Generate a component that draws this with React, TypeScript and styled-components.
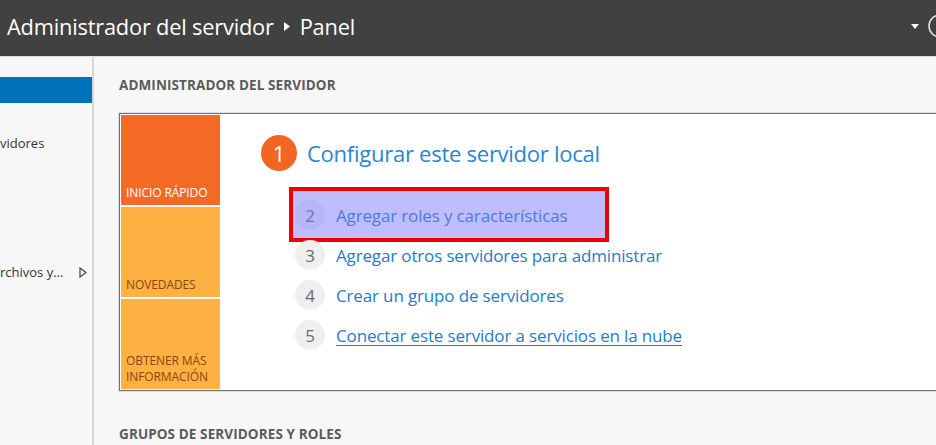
import React from 'react';
import styled, {createGlobalStyle} from 'styled-components';

const GlobalStyle = createGlobalStyle`
  html, body {
    margin: 0;
    padding: 0;
    background: #f7f7f7;
    font-family: "Open Sans", "Noto Sans", "Liberation Sans", sans-serif;
    overflow: hidden;
  }
`;

const Page = styled.div`
  width: 936px;
  height: 445px;
  display: flex;
  flex-direction: column;
  overflow: hidden;
`;

const Header = styled.header`
  height: 56px;
  flex: none;
  background: #414141;
  border-bottom: 1px solid #dcdcdc;
  display: flex;
  align-items: center;
  justify-content: space-between;
  overflow: hidden;
  color: #fff;
`;

const HeaderTitle = styled.h1`
  margin: 0 0 3px 7px;
  font-size: 21.8px;
  font-weight: 400;
  letter-spacing: -0.2px;
  display: flex;
  align-items: center;
  gap: 10px;
  white-space: nowrap;
`;

const HeaderTools = styled.div`
  display: flex;
  align-items: center;
  gap: 9px;
  margin: 0 -16px 4px 0;
`;

const Body = styled.div`
  flex: 1;
  display: flex;
  min-height: 0;
`;

const Sidebar = styled.nav`
  width: 92px;
  flex: none;
  border-right: 2px solid #d6d6d6;
  background: #f7f7f7;
  padding-top: 20px;
  overflow: hidden;
`;

const NavSelected = styled.div`
  height: 26px;
  background: #0072bc;
`;

const NavItem = styled.div<{$top: number}>`
  margin-top: ${({$top}) => $top}px;
  height: 20px;
  display: flex;
  align-items: center;
  justify-content: space-between;
  padding-right: 5px;
  font-size: 13px;
  color: #333;
  white-space: nowrap;
`;

const Main = styled.main`
  flex: 1;
  min-width: 0;
  overflow: hidden;
  padding: 20px 0 0 25px;
`;

const SectionTitle = styled.h2<{$top?: number}>`
  margin: ${({$top}) => $top ?? 0}px 0 0;
  font-size: 13.5px;
  font-weight: 700;
  color: #5b5b5b;
  line-height: 17px;
  letter-spacing: 0.1px;
  white-space: nowrap;
`;

const WelcomeBox = styled.section`
  margin-top: 19px;
  width: 1000px;
  display: flex;
  padding: 1px;
  background: #fff;
  border: 1px solid #727272;
  box-shadow: 0 0 0 1px #dedede;
`;

const TileColumn = styled.div`
  width: 99px;
  flex: none;
  display: flex;
  flex-direction: column;
  gap: 2px;
`;

const Tile = styled.div<{$active?: boolean}>`
  height: 90px;
  background: ${({$active}) => ($active ? '#f36a24' : '#fdb143')};
  color: ${({$active}) => ($active ? '#fff' : '#8a4612')};
  font-size: 12px;
  line-height: 16px;
  letter-spacing: -0.1px;
  display: flex;
  align-items: flex-end;
  padding: 0 2px 4px 5px;
  box-sizing: border-box;
  text-transform: uppercase;
`;

const Steps = styled.div`
  padding: 20px 0 0 41px;
`;

const StepTitle = styled.div`
  display: flex;
  align-items: center;
  gap: 10px;
`;

const BigBadge = styled.span`
  width: 36px;
  height: 36px;
  border-radius: 50%;
  background: #f26522;
  color: #fff;
  font-size: 22px;
  display: flex;
  align-items: center;
  justify-content: center;
`;

const TitleText = styled.span`
  font-size: 22.1px;
  color: #2a86d1;
  letter-spacing: -0.3px;
  white-space: nowrap;
`;

const StepList = styled.ol`
  list-style: none;
  margin: 29px 0 0 34px;
  padding: 0;
  display: flex;
  flex-direction: column;
  align-items: flex-start;
  gap: 10px;
`;

const StepRow = styled.li<{$highlight?: boolean}>`
  position: relative;
  display: flex;
  align-items: center;
  gap: 11px;
  height: 30px;

  ${({$highlight}) => $highlight && `
    &::after {
      content: '';
      position: absolute;
      left: -6px;
      top: -13px;
      bottom: -12px;
      right: -42px;
      border: 4px solid #ee0000;
      background: rgba(120, 120, 255, 0.48);
      box-sizing: border-box;
    }
  `}
`;

const SmallBadge = styled.span`
  width: 30px;
  height: 30px;
  border-radius: 50%;
  background: #efefef;
  color: #6b6b6b;
  font-size: 17px;
  display: flex;
  align-items: center;
  justify-content: center;
`;

const StepLink = styled.a<{$underline?: boolean}>`
  font-size: 17px;
  color: #1f7ccb;
  letter-spacing: -0.15px;
  text-decoration: ${({$underline}) => ($underline ? 'underline' : 'none')};
  text-underline-offset: 3px;
  white-space: nowrap;
`;

const steps = [
  {n: 2, label: 'Agregar roles y características', highlight: true},
  {n: 3, label: 'Agregar otros servidores para administrar'},
  {n: 4, label: 'Crear un grupo de servidores'},
  {n: 5, label: 'Conectar este servidor a servicios en la nube', underline: true},
];

const App: React.FC = () => (
  <Page>
    <GlobalStyle/>
    <Header>
      <HeaderTitle>
        <span>Administrador del servidor</span>
        <svg width="6" height="9" viewBox="0 0 6 9"><path d="M0 0 L6 4.5 L0 9 Z" fill="#fff"/></svg>
        <span>Panel</span>
      </HeaderTitle>
      <HeaderTools>
        <svg width="8" height="5" viewBox="0 0 8 5"><path d="M0 0 H8 L4 5 Z" fill="#fff"/></svg>
        <svg width="24" height="24" viewBox="0 0 24 24">
          <circle cx="12" cy="12" r="11" fill="none" stroke="#e6e6e6" strokeWidth="1.5"/>
        </svg>
      </HeaderTools>
    </Header>
    <Body>
      <Sidebar>
        <NavSelected/>
        <NavItem $top={30}>vidores</NavItem>
        <NavItem $top={109}>
          <span>rchivos y...</span>
          <svg width="8" height="11" viewBox="0 0 8 11">
            <path d="M1 1 L7 5.5 L1 10 Z" fill="none" stroke="#444" strokeWidth="1.2"/>
          </svg>
        </NavItem>
      </Sidebar>
      <Main>
        <SectionTitle>ADMINISTRADOR DEL SERVIDOR</SectionTitle>
        <WelcomeBox>
          <TileColumn>
            <Tile $active>Inicio rápido</Tile>
            <Tile>Novedades</Tile>
            <Tile>Obtener más información</Tile>
          </TileColumn>
          <Steps>
            <StepTitle>
              <BigBadge>1</BigBadge>
              <TitleText>Configurar este servidor local</TitleText>
            </StepTitle>
            <StepList>
              {steps.map(step => (
                <StepRow key={step.n} $highlight={step.highlight}>
                  <SmallBadge>{step.n}</SmallBadge>
                  <StepLink $underline={step.underline}>{step.label}</StepLink>
                </StepRow>
              ))}
            </StepList>
          </Steps>
        </WelcomeBox>
        <SectionTitle $top={35}>GRUPOS DE SERVIDORES Y ROLES</SectionTitle>
      </Main>
    </Body>
  </Page>
);

export default App;
